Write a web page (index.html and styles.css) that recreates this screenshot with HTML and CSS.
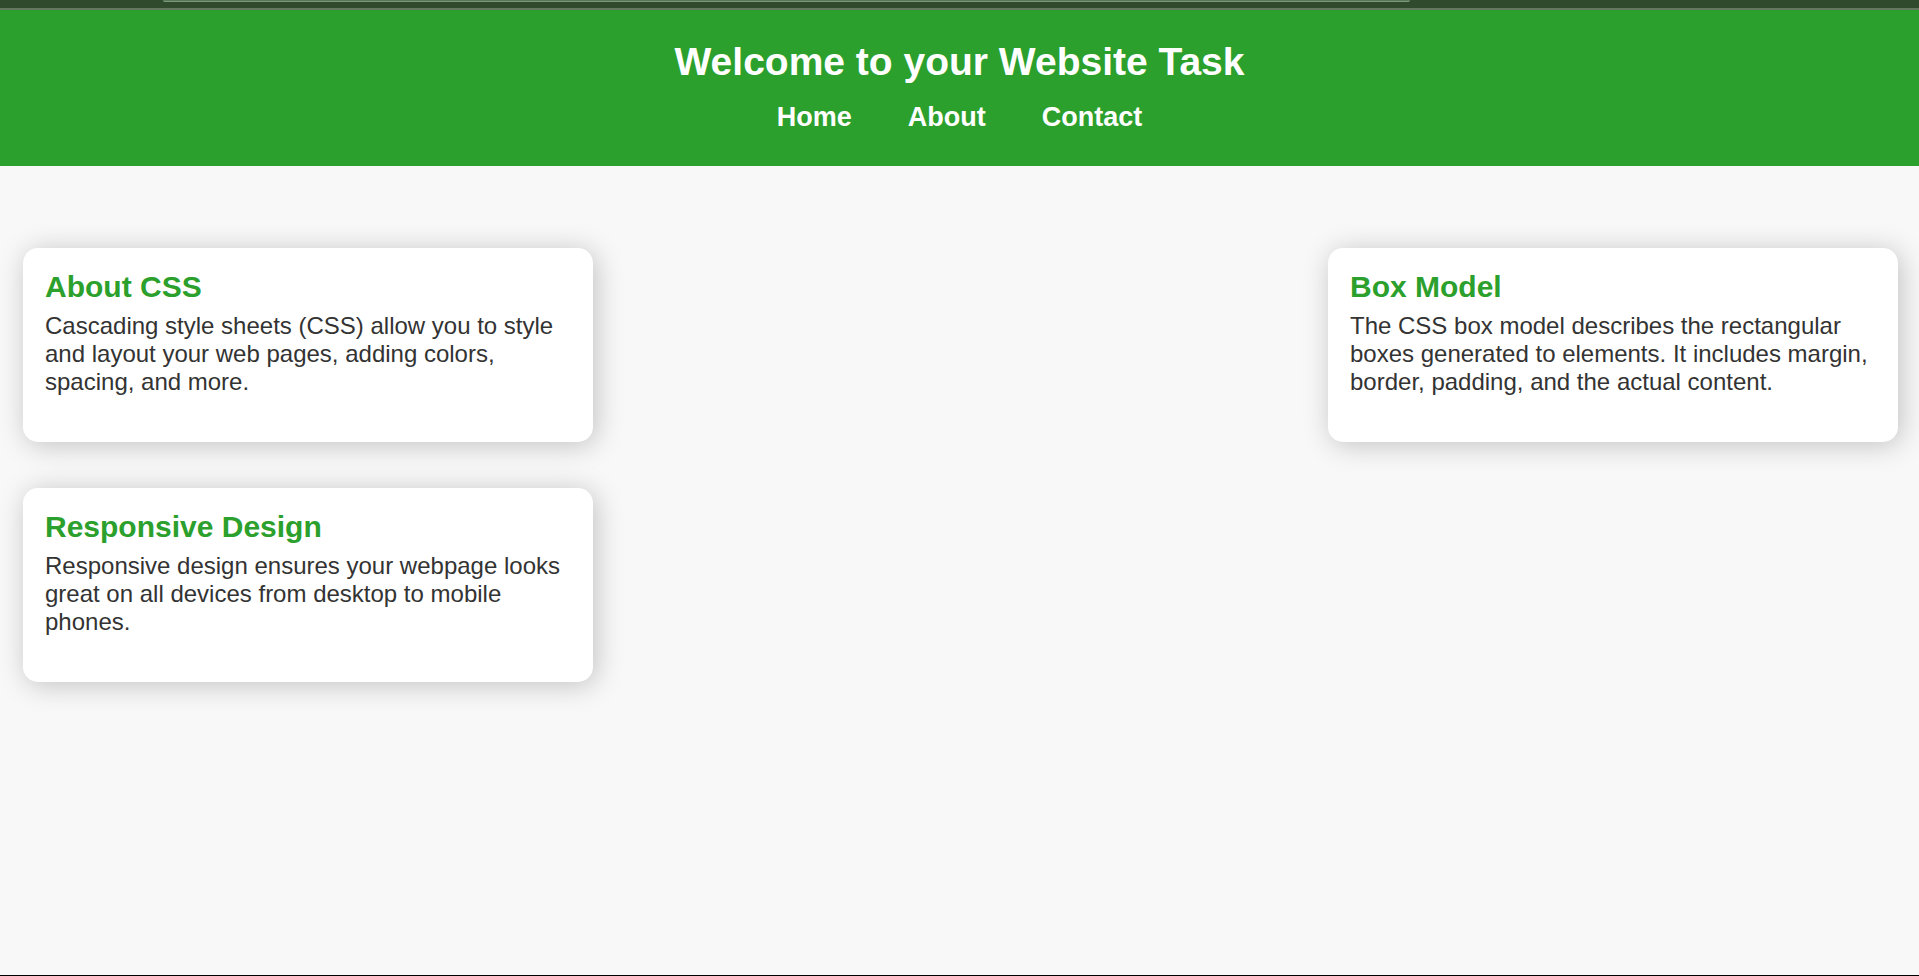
FILE: index.html
```html
<!DOCTYPE html>
<html lang="en">
<head>
<meta charset="utf-8">
<meta name="viewport" content="width=device-width, initial-scale=1">
<title>Website Task</title>
<link rel="stylesheet" href="styles.css">
</head>
<body>
<div class="browser-bar"><div class="address-edge"></div></div>
<header class="site-header">
  <h1 class="site-title">Welcome to your Website Task</h1>
  <nav class="site-nav">
    <a class="nav-link" href="#home">Home</a>
    <a class="nav-link" href="#about">About</a>
    <a class="nav-link" href="#contact">Contact</a>
  </nav>
</header>
<main class="cards">
  <section class="card">
    <h2 class="card-title">About CSS</h2>
    <p class="card-text">Cascading style sheets (CSS) allow you to style and layout your web pages, adding colors, spacing, and more.</p>
  </section>
  <section class="card">
    <h2 class="card-title">Box Model</h2>
    <p class="card-text">The CSS box model describes the rectangular boxes generated to elements. It includes margin, border, padding, and the actual content.</p>
  </section>
  <section class="card">
    <h2 class="card-title">Responsive Design</h2>
    <p class="card-text">Responsive design ensures your webpage looks great on all devices from desktop to mobile phones.</p>
  </section>
</main>
</body>
</html>
```
FILE: styles.css
```css
* {
  box-sizing: border-box;
  margin: 0;
}

body {
  display: flex;
  flex-direction: column;
  min-height: 100vh;
  border-bottom: 1px solid #000;
  background: #f8f8f8;
  color: #333;
  font-family: "Liberation Sans", Arial, sans-serif;
  font-size: 24px;
  line-height: 28px;
}

.browser-bar {
  height: 10px;
  padding: 0 26.5% 0 8.5%;
  overflow: hidden;
  border-bottom: 2px solid #64775f;
  background: #304a2d;
}

.address-edge {
  height: 2px;
  border-bottom: 1px solid #7c9a7c;
  border-radius: 0 0 8px 8px;
  background: #587658;
}

.site-header {
  padding: 30px 22px;
  background: #2ca02c;
  color: #fff;
  text-align: center;
}

.site-title {
  margin-bottom: 14px;
  font-size: 39px;
  line-height: 44px;
}

.site-nav {
  display: flex;
  justify-content: center;
  gap: 56px;
  padding: 4px 0;
}

.nav-link {
  color: #fff;
  font-size: 27px;
  font-weight: bold;
  line-height: 30px;
  text-decoration: none;
}

.cards {
  display: grid;
  grid-template-columns: repeat(2, minmax(0, 570px));
  justify-content: space-between;
  gap: 46px;
  padding: 82px 21px 46px 23px;
}

.card {
  padding: 22px;
  border-radius: 15px;
  background: #fff;
  box-shadow: 3px 3px 28px rgba(0, 0, 0, 0.22);
}

.card-title {
  margin-bottom: 8px;
  color: #2ca02c;
  font-size: 30px;
  line-height: 34px;
}

.card-text {
  margin-bottom: 24px;
}
```
